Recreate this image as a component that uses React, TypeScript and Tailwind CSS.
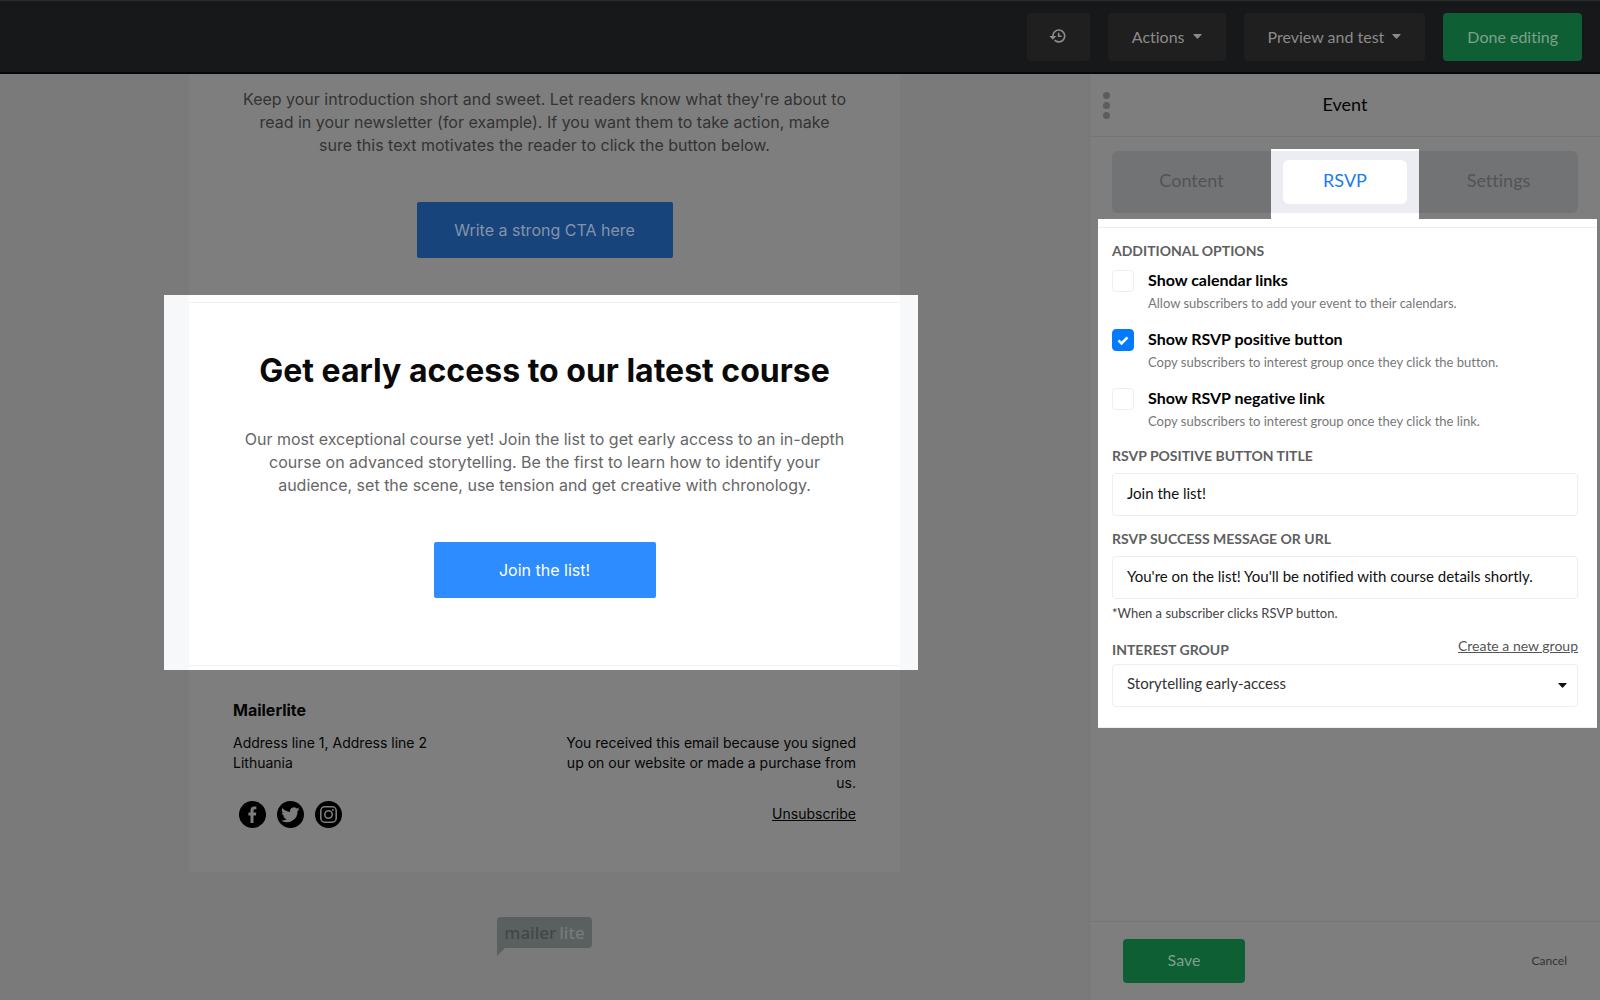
import { clsx } from 'clsx';
import { ReactNode } from 'react';

const options = [
  {
    id: 'calendar-links',
    title: 'Show calendar links',
    text: 'Allow subscribers to add your event to their calendars.',
    checked: false
  },
  {
    id: 'positive-button',
    title: 'Show RSVP positive button',
    text: 'Copy subscribers to interest group once they click the button.',
    checked: true
  },
  {
    id: 'negative-link',
    title: 'Show RSVP negative link',
    text: 'Copy subscribers to interest group once they click the link.',
    checked: false
  }
];

function Caret({ className }: { className?: string }) {
  return (
    <svg viewBox="0 0 10 6" className={clsx('h-[5px] w-[9px]', className)} aria-hidden="true">
      <path d="M0.6 0h8.8c.5 0 .7.5.4.9L5.600 5.500a.8.8 0 0 1-1.200 0L.2.9C-.1.5.1 0 .6 0z" fill="currentColor" />
    </svg>
  );
}

function TopBar() {
  const button = 'flex h-12 items-center rounded bg-[#1f1f1f] text-base';
  return (
    <header className="flex h-[74px] flex-none items-center justify-end gap-[18px] border-t border-b-2 border-t-[#2b2c2d] border-b-[#06070a] bg-[#17181a] pr-[18px] text-[#8b8b8b]">
      <button className={clsx(button, 'w-[63px] justify-center pb-[2px]')} aria-label="History">
        <svg viewBox="0 0 24 24" className="size-[18px]" fill="currentColor" aria-hidden="true">
          <path d="M13 3a9 9 0 0 0-9 9H0.400l4.700 4.900L9.800 12H6.200a6.800 6.800 0 1 1 2 4.800l-1.500 1.600A9 9 0 1 0 13 3zm-1.200 4.600v5.600h5v-2h-2.900V7.600z" />
        </svg>
      </button>
      <button className={clsx(button, 'gap-2 px-6')}>
        Actions <Caret />
      </button>
      <button className={clsx(button, 'gap-2 px-6')}>
        Preview and test <Caret />
      </button>
      <button className="h-12 rounded bg-[#0e5f34] px-6 text-base text-[#7fa08c]">Done editing</button>
    </header>
  );
}

function SocialIcon({ label, children }: { label: string; children: ReactNode }) {
  return (
    <a href="#" aria-label={label} className="block size-[27px]">
      <svg viewBox="0 0 27 27" className="size-full" aria-hidden="true">
        <circle cx="13.500" cy="13.500" r="13.500" fill="#000" />
        {children}
      </svg>
    </a>
  );
}

function Logo() {
  return (
    <div className="mx-auto mt-[45px] w-[95px]">
      <div className="flex h-[31px] items-center justify-center gap-[3px] rounded-t rounded-br bg-[#5a6060] font-['Noto_Sans',sans-serif] text-[17px] leading-none font-medium">
        <span className="text-[#434647]">mailer</span>
        <span className="text-[#757a7a]">lite</span>
      </div>
      <svg viewBox="0 0 8 8" className="size-2" aria-hidden="true">
        <path d="M0 0h8L0 8z" fill="#5a6060" />
      </svg>
    </div>
  );
}

function EmailPreview() {
  return (
    <main className="min-w-0 flex-1 bg-[#7a7a7a] font-['Inter',sans-serif]">
      <div className="mx-auto max-w-[711px] bg-[#7e7e7e] pt-[14px]">
        <p className="text-center text-base leading-[23px] text-[#333]">
          Keep your introduction short and sweet. Let readers know what they&apos;re about to
          <br />
          read in your newsletter (for example). If you want them to take action, make
          <br />
          sure this text motivates the reader to click the button below.
        </p>
        <button className="mx-auto mt-[45px] mb-[37px] block h-14 w-64 rounded-xs bg-[#18447c] text-base text-[#8394a9]">
          Write a strong CTA here
        </button>

        <section className="-mr-[18px] -ml-[25px] border-r-[18px] border-l-[25px] border-[#f7f8fa] bg-white pt-[7px] pb-1 text-center">
          <div className="border-y border-[#f1f1f1] pt-12 pb-[67px]">
            <h1 className="text-[32px] leading-10 font-bold text-[#0a0a0a]">Get early access to our latest course</h1>
            <p className="mt-[37px] text-base leading-[23px] text-[#666]">
              Our most exceptional course yet! Join the list to get early access to an in-depth
              <br />
              course on advanced storytelling. Be the first to learn how to identify your
              <br />
              audience, set the scene, use tension and get creative with chronology.
            </p>
            <button className="mt-[45px] h-14 w-[222px] rounded-xs bg-[#2d8cff] text-base text-white">
              Join the list!
            </button>
          </div>
        </section>

        <footer className="flex justify-between px-11 pt-7 pb-11 text-sm leading-5 text-[#050505]">
          <div>
            <h2 className="text-base leading-6 font-bold">Mailerlite</h2>
            <address className="mt-[11px] not-italic">
              Address line 1, Address line 2
              <br />
              Lithuania
            </address>
            <div className="mt-7 ml-[6px] flex gap-[11px]">
              <SocialIcon label="Facebook">
                <path
                  d="M11.500 22v-7.600H9.400v-2.900h2.100V9.400c0-2.500 1.300-3.900 3.800-3.900.9 0 1.700.1 2.100.2v2.500h-1.400c-1.200 0-1.500.6-1.500 1.500v1.800h2.800l-.4 2.900h-2.400V22z"
                  fill="#7e7e7e"
                />
              </SocialIcon>
              <SocialIcon label="Twitter">
                <path
                  transform="translate(4.500 4.300) scale(0.760)"
                  d="M23.600 4.900c-.9.400-1.800.6-2.800.8 1-.6 1.800-1.600 2.200-2.700-1 .6-2 1-3.100 1.200a4.900 4.900 0 0 0-8.400 4.500A14 14 0 0 1 1.300 3.500a4.900 4.900 0 0 0 1.500 6.600c-.8 0-1.600-.2-2.200-.6v.1c0 2.400 1.700 4.400 3.900 4.800-.7.200-1.500.2-2.200.1.600 2 2.400 3.400 4.600 3.400A9.900 9.900 0 0 1-.4 20a13.900 13.900 0 0 0 21.500-12.400c1-.7 1.800-1.600 2.500-2.700z"
                  fill="#7e7e7e"
                />
              </SocialIcon>
              <SocialIcon label="Instagram">
                <g fill="none" stroke="#7e7e7e" strokeWidth="1.600">
                  <rect x="5.800" y="5.800" width="15.400" height="15.400" rx="4" />
                  <circle cx="13.500" cy="13.500" r="3.700" />
                </g>
                <circle cx="17.900" cy="9.100" r="1" fill="#7e7e7e" />
              </SocialIcon>
            </div>
          </div>
          <div className="pt-[35px] text-right">
            <p>
              You received this email because you signed
              <br />
              up on our website or made a purchase from
              <br />
              us.
            </p>
            <a href="#" className="mt-[11px] inline-block underline">
              Unsubscribe
            </a>
          </div>
        </footer>
      </div>
      <Logo />
    </main>
  );
}

function FieldLabel({ htmlFor, children }: { htmlFor: string; children: ReactNode }) {
  return (
    <label htmlFor={htmlFor} className="block text-sm leading-5 font-bold text-[#5f5f5f] uppercase">
      {children}
    </label>
  );
}

function RsvpForm() {
  const field = 'block h-[43px] w-full rounded border border-[#eee] bg-white px-[14px] pb-1 text-[15px]';
  return (
    <form className="mr-[3px] ml-2 bg-white pt-2">
      <div className="border-y border-[#efefef] pt-[13px] pr-[19px] pb-5 pl-[14px]">
        <fieldset>
          <legend className="text-sm leading-5 font-bold text-[#5f5f5f] uppercase">Additional options</legend>
          <div className="mt-[9px] space-y-[13px]">
            {options.map((option) => (
              <div key={option.id} className="flex gap-[14px]">
                <span className="relative block size-[22px] flex-none">
                  <input
                    id={option.id}
                    type="checkbox"
                    defaultChecked={option.checked}
                    className="peer block size-full appearance-none rounded border border-[#eee] bg-white checked:border-[#007bff] checked:bg-[#007bff]"
                  />
                  <svg
                    viewBox="0 0 22 22"
                    className="pointer-events-none absolute inset-0 hidden peer-checked:block"
                    aria-hidden="true"
                  >
                    <path d="M6.500 11.300l3 3 6-6" fill="none" stroke="#fff" strokeWidth="2.600" />
                  </svg>
                </span>
                <div>
                  <label htmlFor={option.id} className="block text-base leading-5 font-bold text-black">
                    {option.title}
                  </label>
                  <p className="text-[13px] leading-[26px] text-[#777]">{option.text}</p>
                </div>
              </div>
            ))}
          </div>
        </fieldset>

        <div className="mt-3">
          <FieldLabel htmlFor="button-title">RSVP positive button title</FieldLabel>
          <input id="button-title" defaultValue="Join the list!" className={clsx(field, 'mt-[7px] text-[#111]')} />
        </div>

        <div className="mt-[13px]">
          <FieldLabel htmlFor="success-message">RSVP success message or URL</FieldLabel>
          <input
            id="success-message"
            defaultValue="You're on the list! You'll be notified with course details shortly."
            className={clsx(field, 'mt-[7px] text-[#111]')}
          />
          <p className="mt-1 text-[13px] leading-5 text-[#444]">*When a subscriber clicks RSVP button.</p>
        </div>

        <div className="mt-[13px]">
          <div className="flex items-end justify-between">
            <FieldLabel htmlFor="interest-group">Interest group</FieldLabel>
            <a href="#" className="pb-1 text-sm leading-5 text-[#555] underline">
              Create a new group
            </a>
          </div>
          <div className="relative mt-1">
            <select id="interest-group" className={clsx(field, 'appearance-none text-[#333]')}>
              <option>Storytelling early-access</option>
            </select>
            <Caret className="pointer-events-none absolute top-[19px] right-[11px] text-[#111]" />
          </div>
        </div>
      </div>
    </form>
  );
}

function Sidebar() {
  return (
    <aside className="flex w-[511px] flex-none flex-col border-l border-[#757575] bg-[#7e7e7e]">
      <div className="flex h-[63px] flex-none items-center border-b border-[#757575] pr-8 pl-[13px]">
        <button className="space-y-[3px]" aria-label="Drag panel">
          <span className="block size-[7px] rounded-full bg-[#5c5c5c]" />
          <span className="block size-[7px] rounded-full bg-[#5c5c5c]" />
          <span className="block size-[7px] rounded-full bg-[#5c5c5c]" />
        </button>
        <h2 className="flex-1 pb-[2px] pl-3 text-center text-lg text-[#050505]">Event</h2>
      </div>

      <div role="tablist" className="mx-[22px] flex pt-3 text-lg text-[#525354]">
        <button role="tab" className="mt-[2px] mb-[6px] h-[62px] flex-1 rounded-l-md bg-[#727374] pb-1">
          Content
        </button>
        <div className="w-[148px] bg-white pt-[2px] pb-[6px]">
          <div className="flex h-[62px] items-center bg-[#ebedf2] px-3">
            <button role="tab" aria-selected="true" className="h-11 w-full rounded-md bg-white pb-1 text-[#1a7bef]">
              RSVP
            </button>
          </div>
        </div>
        <button role="tab" className="mt-[2px] mb-[6px] h-[62px] flex-1 rounded-r-md bg-[#727374] pb-1">
          Settings
        </button>
      </div>

      <RsvpForm />

      <div className="mt-auto flex h-[79px] flex-none items-center justify-between border-t border-[#757575] px-[33px]">
        <button className="h-11 w-[122px] rounded bg-[#0e5f34] pb-[2px] text-base text-[#7fa08c]">Save</button>
        <button className="text-xs text-[#333]">Cancel</button>
      </div>
    </aside>
  );
}

export default function App() {
  return (
    <div className="flex min-h-screen flex-col font-['Lato',sans-serif] [font-variant-ligatures:no-common-ligatures]">
      <TopBar />
      <div className="flex flex-1">
        <EmailPreview />
        <Sidebar />
      </div>
    </div>
  );
}
